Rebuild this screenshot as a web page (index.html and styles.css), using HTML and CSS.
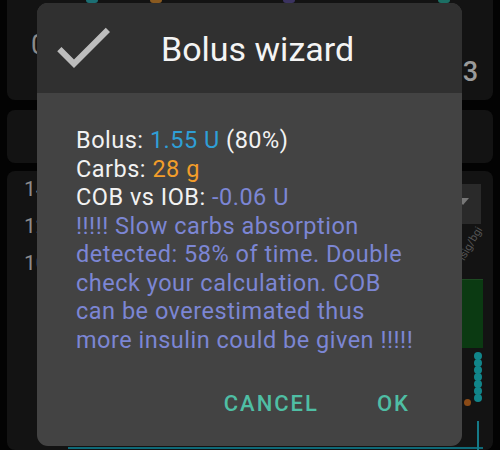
FILE: index.html
```html
<!DOCTYPE html>
<html>
<head>
<meta charset="utf-8">
<link rel="stylesheet" href="styles.css">
</head>
<body>
<div class="app">
  <div class="card card-top">
    <span class="big-num">0</span>
    <span class="big-num right">3</span>
  </div>
  <div class="card card-mid"></div>
  <div class="card card-graph">
    <div class="axis">
      <span>14</span>
      <span>12</span>
      <span>10</span>
    </div>
    <div class="graph">
      <div class="dropdown"><span class="caret"></span></div>
      <span class="rot">isig/bgi</span>
      <div class="green"></div>
      <div class="dots">
        <i></i><i></i><i></i><i></i><i></i><i></i><i></i>
      </div>
      <div class="orange-dot"></div>
      <div class="tealline"></div>
      <div class="tealvert"></div>
    </div>
  </div>
  <div class="topicons">
    <i class="ic teal"></i><i class="ic orange"></i><i class="ic purple"></i><i class="ic teal2"></i>
  </div>
</div>

<div class="dialog">
  <div class="header">
    <svg class="check" viewBox="0 0 24 24" width="72" height="72"><path d="M9 16.17L4.83 12l-1.42 1.41L9 19 21 7l-1.41-1.41z" fill="#bdbdbd"/></svg>
    <div class="title">Bolus wizard</div>
  </div>
  <div class="body">
    <div>Bolus: <span class="blue">1.55 U</span> (80%)</div>
    <div>Carbs: <span class="orange-t">28 g</span></div>
    <div>COB vs IOB: <span class="purple-t">-0.06 U</span></div>
    <div class="purple-t">!!!!! Slow carbs absorption detected: 58% of time. Double check your calculation. COB can be overestimated thus more insulin could be given !!!!!</div>
  </div>
  <div class="actions">
    <span class="btn">CANCEL</span>
    <span class="btn">OK</span>
  </div>
</div>
</body>
</html>
```
FILE: styles.css
```css
html, body {
  margin: 0;
  padding: 0;
}
body {
  width: 500px;
  height: 450px;
  overflow: hidden;
  background: #030303;
  position: relative;
  font-family: Roboto, "Liberation Sans", sans-serif;
}
.app {
  display: flex;
  flex-direction: column;
  padding: 0 7px;
  height: 450px;
  box-sizing: border-box;
}
.card {
  background: #131313;
  border-radius: 8px;
}
.card-top {
  height: 100px;
  border-radius: 0 0 8px 8px;
  display: flex;
  justify-content: space-between;
  align-items: center;
  padding: 0 15px 0 24px;
}
.big-num {
  color: #8a8a8a;
  font-size: 27px;
  margin-top: -10px;
}
.big-num.right {
  color: #9a9a9a;
  font-size: 27px;
  margin-top: 44px;
  font-weight: 500;
}
.card-mid {
  height: 53px;
  margin-top: 10px;
}
.card-graph {
  flex: 1;
  margin-top: 8px;
  display: flex;
  position: relative;
}
.axis {
  display: flex;
  flex-direction: column;
  padding: 0 0 0 17px;
  color: #8c8c8c;
  font-size: 21px;
  line-height: 37px;
}
.graph {
  position: relative;
  flex: 1;
}
.dropdown {
  position: absolute;
  right: 12px;
  top: 13px;
  width: 24px;
  height: 40px;
  background: #2a2a2a;
}
.caret {
  position: absolute;
  left: 0;
  top: 14px;
  border-left: 6px solid transparent;
  border-right: 6px solid transparent;
  border-top: 7px solid #777;
}
.rot {
  position: absolute;
  right: 4px;
  top: 66px;
  color: #555;
  font-size: 11px;
  transform: rotate(-60deg);
}
.green {
  position: absolute;
  right: 10px;
  top: 108px;
  width: 24px;
  height: 68px;
  background: #0b3a12;
  border-top: 1px solid #1d4a22;
}
.dots {
  position: absolute;
  right: 11px;
  top: 182px;
  display: flex;
  flex-direction: column;
}
.dots i {
  display: block;
  width: 8px;
  height: 8px;
  margin-top: -1px;
  border-radius: 50%;
  background: #11858a;
}
.orange-dot {
  position: absolute;
  right: 22px;
  top: 228px;
  width: 7px;
  height: 7px;
  border-radius: 50%;
  background: #8a4a16;
}
.tealline {
  position: absolute;
  left: 20px;
  right: 10px;
  top: 276px;
  height: 8px;
  border-top: 2px solid #0f6a78;
}
.tealvert {
  position: absolute;
  right: 14px;
  top: 250px;
  width: 2px;
  height: 40px;
  background: #157a88;
}
.topicons {
  position: absolute;
  top: 0;
  left: 0;
  width: 500px;
}
.ic {
  position: absolute;
  top: -4px;
  width: 12px;
  height: 7px;
  border-radius: 3px;
}
.ic.teal { left: 86px; background: #1c6f74; }
.ic.orange { left: 150px; background: #8a5a20; }
.ic.purple { left: 283px; background: #3b3360; }
.ic.teal2 { left: 438px; background: #1c6f64; }

.dialog {
  position: absolute;
  left: 37px;
  top: 3px;
  width: 425px;
  height: 443px;
  background: #434343;
  border-radius: 11px;
  overflow: hidden;
  display: flex;
  flex-direction: column;
}
.header {
  height: 90px;
  background: #303030;
  display: flex;
  align-items: flex-start;
  flex-shrink: 0;
}
.check {
  margin: 8px 0 0 10px;
  flex-shrink: 0;
}
.title {
  margin: 26px 0 0 42px;
  color: #f4f4f4;
  font-size: 34px;
  line-height: 40px;
}
.body {
  padding: 33px 40px 0 39px;
  color: #f2f2f2;
  font-size: 23.5px;
  line-height: 28.5px;
  letter-spacing: 0.5px;
}
.blue { color: #2f9fd6; }
.orange-t { color: #f29d2a; }
.purple-t { color: #7c86d4; }
.actions {
  display: flex;
  justify-content: flex-end;
  gap: 58px;
  padding-right: 52px;
  margin-top: 37px;
}
.btn {
  color: #4fbea4;
  font-weight: 500;
  font-size: 22px;
  line-height: 26px;
  letter-spacing: 2px;
}
```
